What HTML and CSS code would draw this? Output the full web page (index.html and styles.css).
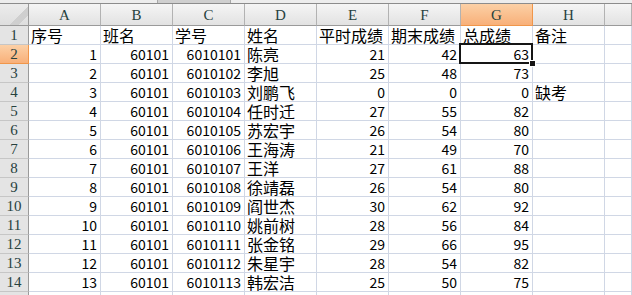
FILE: index.html
```html
<!DOCTYPE html>
<html>
<head>
    <meta charset="utf-8">
    <title>成绩表</title>
    <link rel="stylesheet" href="styles.css">
</head>
<body>
    <div class="topbar"><div class="thumb"></div></div>

    <div class="sheet">
        <div class="row head">
            <div class="cell corner"></div>
            <div class="cell col">A</div>
            <div class="cell col">B</div>
            <div class="cell col">C</div>
            <div class="cell col">D</div>
            <div class="cell col">E</div>
            <div class="cell col">F</div>
            <div class="cell col sel">G</div>
            <div class="cell col">H</div>
            <div class="cell col"></div>
        </div>

        <div class="row">
            <div class="cell rh">1</div>
            <div class="cell">序号</div>
            <div class="cell">班名</div>
            <div class="cell">学号</div>
            <div class="cell">姓名</div>
            <div class="cell">平时成绩</div>
            <div class="cell">期末成绩</div>
            <div class="cell">总成绩</div>
            <div class="cell">备注</div>
            <div class="cell"></div>
        </div>
        <div class="row">
            <div class="cell rh sel">2</div>
            <div class="cell num">1</div>
            <div class="cell num">60101</div>
            <div class="cell num">6010101</div>
            <div class="cell">陈亮</div>
            <div class="cell num">21</div>
            <div class="cell num">42</div>
            <div class="cell num cur">63</div>
            <div class="cell"></div>
            <div class="cell"></div>
        </div>
        <div class="row">
            <div class="cell rh">3</div>
            <div class="cell num">2</div>
            <div class="cell num">60101</div>
            <div class="cell num">6010102</div>
            <div class="cell">李旭</div>
            <div class="cell num">25</div>
            <div class="cell num">48</div>
            <div class="cell num">73</div>
            <div class="cell"></div>
            <div class="cell"></div>
        </div>
        <div class="row">
            <div class="cell rh">4</div>
            <div class="cell num">3</div>
            <div class="cell num">60101</div>
            <div class="cell num">6010103</div>
            <div class="cell">刘鹏飞</div>
            <div class="cell num">0</div>
            <div class="cell num">0</div>
            <div class="cell num">0</div>
            <div class="cell">缺考</div>
            <div class="cell"></div>
        </div>
        <div class="row">
            <div class="cell rh">5</div>
            <div class="cell num">4</div>
            <div class="cell num">60101</div>
            <div class="cell num">6010104</div>
            <div class="cell">任时迁</div>
            <div class="cell num">27</div>
            <div class="cell num">55</div>
            <div class="cell num">82</div>
            <div class="cell"></div>
            <div class="cell"></div>
        </div>
        <div class="row">
            <div class="cell rh">6</div>
            <div class="cell num">5</div>
            <div class="cell num">60101</div>
            <div class="cell num">6010105</div>
            <div class="cell">苏宏宇</div>
            <div class="cell num">26</div>
            <div class="cell num">54</div>
            <div class="cell num">80</div>
            <div class="cell"></div>
            <div class="cell"></div>
        </div>
        <div class="row">
            <div class="cell rh">7</div>
            <div class="cell num">6</div>
            <div class="cell num">60101</div>
            <div class="cell num">6010106</div>
            <div class="cell">王海涛</div>
            <div class="cell num">21</div>
            <div class="cell num">49</div>
            <div class="cell num">70</div>
            <div class="cell"></div>
            <div class="cell"></div>
        </div>
        <div class="row">
            <div class="cell rh">8</div>
            <div class="cell num">7</div>
            <div class="cell num">60101</div>
            <div class="cell num">6010107</div>
            <div class="cell">王洋</div>
            <div class="cell num">27</div>
            <div class="cell num">61</div>
            <div class="cell num">88</div>
            <div class="cell"></div>
            <div class="cell"></div>
        </div>
        <div class="row">
            <div class="cell rh">9</div>
            <div class="cell num">8</div>
            <div class="cell num">60101</div>
            <div class="cell num">6010108</div>
            <div class="cell">徐靖磊</div>
            <div class="cell num">26</div>
            <div class="cell num">54</div>
            <div class="cell num">80</div>
            <div class="cell"></div>
            <div class="cell"></div>
        </div>
        <div class="row">
            <div class="cell rh">10</div>
            <div class="cell num">9</div>
            <div class="cell num">60101</div>
            <div class="cell num">6010109</div>
            <div class="cell">阎世杰</div>
            <div class="cell num">30</div>
            <div class="cell num">62</div>
            <div class="cell num">92</div>
            <div class="cell"></div>
            <div class="cell"></div>
        </div>
        <div class="row">
            <div class="cell rh">11</div>
            <div class="cell num">10</div>
            <div class="cell num">60101</div>
            <div class="cell num">6010110</div>
            <div class="cell">姚前树</div>
            <div class="cell num">28</div>
            <div class="cell num">56</div>
            <div class="cell num">84</div>
            <div class="cell"></div>
            <div class="cell"></div>
        </div>
        <div class="row">
            <div class="cell rh">12</div>
            <div class="cell num">11</div>
            <div class="cell num">60101</div>
            <div class="cell num">6010111</div>
            <div class="cell">张金铭</div>
            <div class="cell num">29</div>
            <div class="cell num">66</div>
            <div class="cell num">95</div>
            <div class="cell"></div>
            <div class="cell"></div>
        </div>
        <div class="row">
            <div class="cell rh">13</div>
            <div class="cell num">12</div>
            <div class="cell num">60101</div>
            <div class="cell num">6010112</div>
            <div class="cell">朱星宇</div>
            <div class="cell num">28</div>
            <div class="cell num">54</div>
            <div class="cell num">82</div>
            <div class="cell"></div>
            <div class="cell"></div>
        </div>
        <div class="row">
            <div class="cell rh">14</div>
            <div class="cell num">13</div>
            <div class="cell num">60101</div>
            <div class="cell num">6010113</div>
            <div class="cell">韩宏洁</div>
            <div class="cell num">25</div>
            <div class="cell num">50</div>
            <div class="cell num">75</div>
            <div class="cell"></div>
            <div class="cell"></div>
        </div>
        <div class="row last">
            <div class="cell rh"></div>
            <div class="cell"></div>
            <div class="cell"></div>
            <div class="cell"></div>
            <div class="cell"></div>
            <div class="cell"></div>
            <div class="cell"></div>
            <div class="cell"></div>
            <div class="cell"></div>
            <div class="cell"></div>
        </div>
    </div>
</body>
</html>
```

FILE: styles.css
```css
body {
    margin: 0;
    background: #fff;
    font-family: "Noto Sans CJK SC", sans-serif;
    color: #000;
    overflow: hidden;
}

/* thin strip above the column headers */
.topbar {
    height: 3px;
    background: #ededed;
    border-bottom: 1px solid #8c8c8c;
    display: flex;
}

.topbar .thumb {
    margin-left: 157px;
    width: 72px;
    background: #cfcfcf;
    border-left: 1px solid #a8a8a8;
    border-right: 1px solid #a8a8a8;
}

.sheet {
    height: 291px;
    overflow: hidden;
}

.row {
    display: grid;
    grid-template-columns: 29px repeat(8, 72px) 1fr;
    height: 19px;
}

.row.head {
    height: 22px;
}

.row.last {
    height: 3px;
}

.cell {
    box-sizing: border-box;
    display: flex;
    align-items: flex-end;
    padding: 0 2px;
    border-right: 1px solid #d0d7e5;
    border-bottom: 1px solid #d0d7e5;
    font-size: 16px;
    line-height: 18px;
    white-space: nowrap;
}

.num {
    justify-content: flex-end;
    padding-right: 3px;
    font-size: 14px;
}

/* column letters */
.col {
    justify-content: center;
    align-items: center;
    background: linear-gradient(#f5f5f5, #e2e2e2);
    border-right: 1px solid #b2b2b2;
    border-bottom: 1px solid #9a9a9a;
    font-family: "Liberation Serif", serif;
    font-size: 15px;
    color: #27413e;
}

.corner {
    background: linear-gradient(135deg, transparent 62%, #cfcfcf 62%, #cfcfcf 80%, transparent 80%),
                linear-gradient(#ececec, #dedede);
    border-right: 1px solid #9a9a9a;
    border-bottom: 1px solid #9a9a9a;
}

/* row numbers */
.rh {
    justify-content: center;
    background: #e4e4e4;
    border-right: 1px solid #9a9a9a;
    border-bottom: 1px solid #c6c6c6;
    font-family: "Liberation Serif", serif;
    font-size: 15px;
    color: #27413e;
}

.row.last .cell {
    border-bottom: none;
}

.col.sel,
.rh.sel {
    background: linear-gradient(#fcd0a6, #f8b079);
    border-color: #f0964a;
}

/* active cell frame and fill handle */
.cur {
    position: relative;
}

.cur::before {
    content: "";
    position: absolute;
    left: -2px;
    top: -2px;
    right: -1px;
    bottom: -1px;
    border: 2px solid #151515;
    z-index: 1;
}

.cur::after {
    content: "";
    position: absolute;
    right: -4px;
    bottom: -4px;
    width: 5px;
    height: 5px;
    background: #151515;
    border: 1px solid #fff;
    z-index: 2;
}
```
